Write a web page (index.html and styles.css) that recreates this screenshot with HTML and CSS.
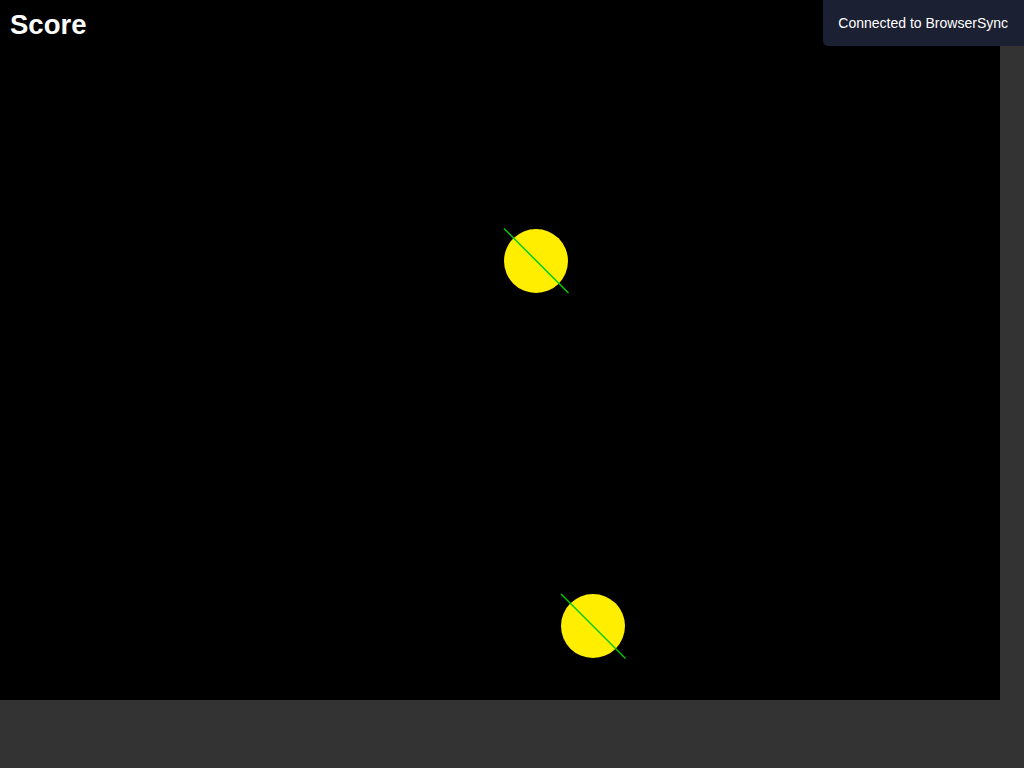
FILE: index.html
```html
<!DOCTYPE html>
<html>
<head>
<meta charset="utf-8">
<link rel="stylesheet" href="styles.css">
</head>
<body>
<div class="stage">
  <svg class="field" width="1000" height="700" viewBox="0 0 1000 700">
    <circle cx="536" cy="261" r="32" fill="#ffee00"/>
    <line x1="504" y1="228.5" x2="568.5" y2="293" stroke="#00cc00" stroke-width="1.5"/>
    <circle cx="593" cy="626" r="32" fill="#ffee00"/>
    <line x1="561" y1="594" x2="625.5" y2="658.5" stroke="#00cc00" stroke-width="1.5"/>
  </svg>
  <div class="score">Score</div>
</div>
<div class="notify">Connected to BrowserSync</div>
</body>
</html>
```
FILE: styles.css
```css
html, body {
  margin: 0;
  padding: 0;
  background: #333333;
  height: 100%;
}
.stage {
  position: relative;
  width: 1000px;
  height: 700px;
  background: #000;
}
.field {
  display: block;
}
.score {
  position: absolute;
  left: 10px;
  top: 9px;
  color: #fff;
  font-family: "Liberation Sans", Arial, sans-serif;
  font-weight: bold;
  font-size: 27.5px;
  line-height: 32px;
}
.notify {
  position: fixed;
  top: 0;
  right: 0;
  padding: 15px 16px 15px 15px;
  font-family: "Liberation Sans", Arial, sans-serif;
  font-size: 14px;
  line-height: 16px;
  color: #fff;
  background: #1b2032;
  border-bottom-left-radius: 5px;
  white-space: nowrap;
}
```
